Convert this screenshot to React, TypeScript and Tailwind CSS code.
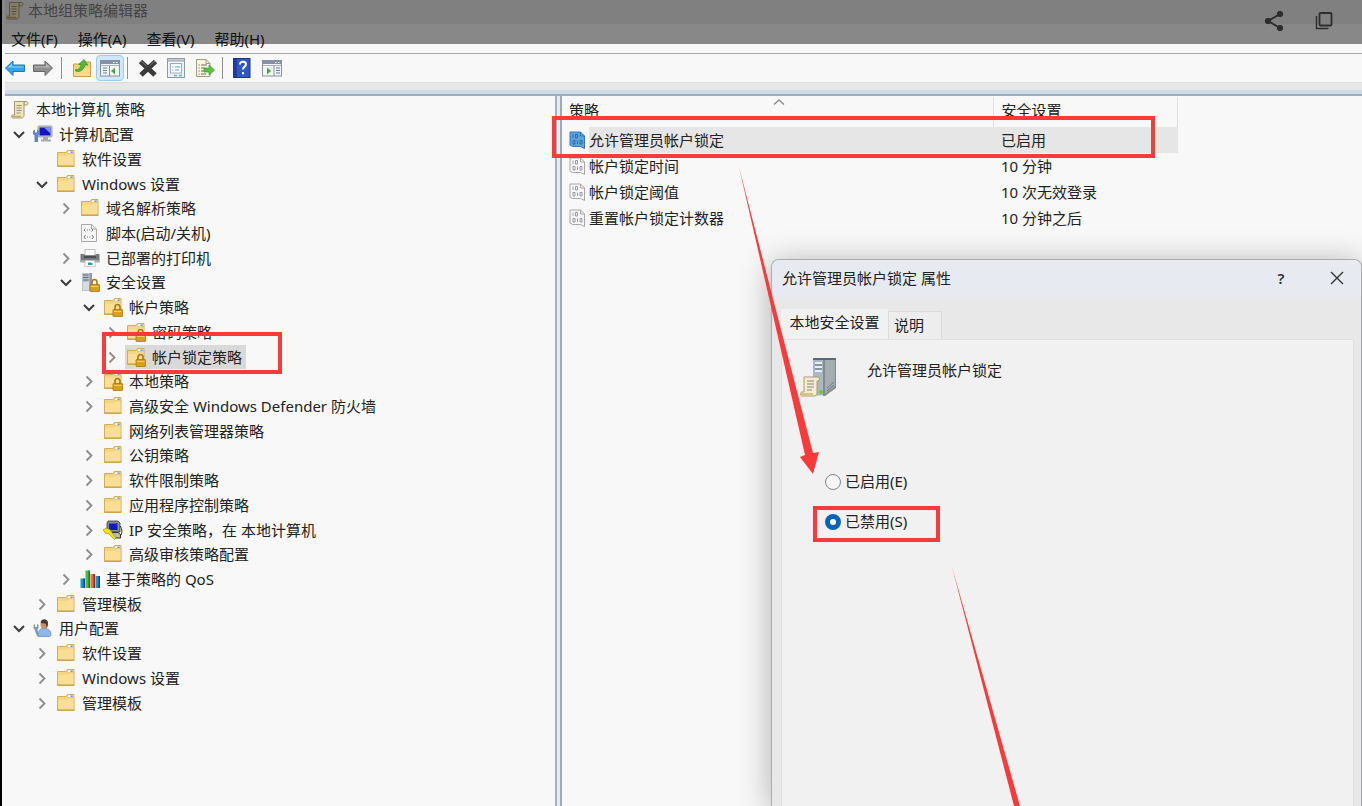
import React, { useState } from "react";

type IconName =
  | "scroll"
  | "computer"
  | "folder"
  | "folderLock"
  | "script"
  | "printer"
  | "server"
  | "ipsec"
  | "qos"
  | "user";

type TreeNode = {
  label: string;
  level: number;
  icon: IconName;
  state?: "open" | "closed";
  selected?: boolean;
};

const menus = ["文件(F)", "操作(A)", "查看(V)", "帮助(H)"];

const tree: TreeNode[] = [
  { label: "本地计算机 策略", level: 0, icon: "scroll" },
  { label: "计算机配置", level: 1, icon: "computer", state: "open" },
  { label: "软件设置", level: 2, icon: "folder" },
  { label: "Windows 设置", level: 2, icon: "folder", state: "open" },
  { label: "域名解析策略", level: 3, icon: "folder", state: "closed" },
  { label: "脚本(启动/关机)", level: 3, icon: "script" },
  { label: "已部署的打印机", level: 3, icon: "printer", state: "closed" },
  { label: "安全设置", level: 3, icon: "server", state: "open" },
  { label: "帐户策略", level: 4, icon: "folderLock", state: "open" },
  { label: "密码策略", level: 5, icon: "folderLock", state: "closed" },
  { label: "帐户锁定策略", level: 5, icon: "folderLock", state: "closed", selected: true },
  { label: "本地策略", level: 4, icon: "folderLock", state: "closed" },
  { label: "高级安全 Windows Defender 防火墙", level: 4, icon: "folder", state: "closed" },
  { label: "网络列表管理器策略", level: 4, icon: "folder" },
  { label: "公钥策略", level: 4, icon: "folder", state: "closed" },
  { label: "软件限制策略", level: 4, icon: "folder", state: "closed" },
  { label: "应用程序控制策略", level: 4, icon: "folder", state: "closed" },
  { label: "IP 安全策略，在 本地计算机", level: 4, icon: "ipsec", state: "closed" },
  { label: "高级审核策略配置", level: 4, icon: "folder", state: "closed" },
  { label: "基于策略的 QoS", level: 3, icon: "qos", state: "closed" },
  { label: "管理模板", level: 2, icon: "folder", state: "closed" },
  { label: "用户配置", level: 1, icon: "user", state: "open" },
  { label: "软件设置", level: 2, icon: "folder", state: "closed" },
  { label: "Windows 设置", level: 2, icon: "folder", state: "closed" },
  { label: "管理模板", level: 2, icon: "folder", state: "closed" },
];

const indent = ["pl-[4px]", "pl-[7px]", "pl-[30px]", "pl-[54px]", "pl-[77px]", "pl-[100px]"];

const policies = [
  { name: "允许管理员帐户锁定", value: "已启用" },
  { name: "帐户锁定时间", value: "10 分钟" },
  { name: "帐户锁定阈值", value: "10 次无效登录" },
  { name: "重置帐户锁定计数器", value: "10 分钟之后" },
];

function FolderShape() {
  return (
    <>
      <path d="M1.500 3.500h8.500l1.500-2h6.500v16h-16.500z" fill="#f3d583" stroke="#d3ad58" />
      <path d="M2 7h9.500l1.500-1.500H17.500V17H2z" fill="#f8df95" />
      <path d="M1.500 17h17" stroke="#c39b45" />
      <rect x="11.500" y="2" width="6" height="2.500" fill="#fff" stroke="#d3ad58" strokeWidth="0.500" />
      <rect x="14.500" y="2.500" width="2.200" height="1.500" fill="#5b9bd5" />
    </>
  );
}

function LockShape() {
  return (
    <>
      <path d="M12 13v-2.500a2.500 3 0 0 1 5 0V13" fill="none" stroke="#a77a12" strokeWidth="1.600" />
      <rect x="10" y="12.500" width="9.500" height="7" rx="0.500" fill="#d9a020" stroke="#a9780f" strokeWidth="0.800" />
      <path d="M11 14.500h7.500" stroke="#f3cd62" />
    </>
  );
}

function ScrollShape() {
  return (
    <>
      <path d="M4.500 2.500h12c2 0 2 3.500 0 3.500H14v10.500c0 2-1.500 2.500-3 2.500H3c-2 0-2-3 0-3h1.500z" fill="#f3e6bc" stroke="#a5987a" />
      <path d="M14 6V4c0-1 1-1.500 2-1.500" fill="none" stroke="#8d846d" />
      <path d="M2 17.500h9" stroke="#c5a95e" strokeWidth="1.500" />
      <path d="M6.500 6.500h5M6.500 9h5M6.500 11.500h5M6.500 14h4" stroke="#938b7b" />
    </>
  );
}

function TreeIcon({ name }: { name: IconName }) {
  return (
    <svg viewBox="0 0 20 20" className="size-5 shrink-0" aria-hidden="true">
      {name === "folder" && <FolderShape />}
      {name === "folderLock" && (
        <>
          <FolderShape />
          <LockShape />
        </>
      )}
      {name === "scroll" && <ScrollShape />}
      {name === "computer" && (
        <>
          <rect x="5" y="2" width="14" height="11" rx="1" fill="#c9ccd4" stroke="#8b8f9a" strokeWidth="0.800" />
          <rect x="6.500" y="3.500" width="11" height="8" fill="#1414c4" />
          <path d="M11 3.500h6.500v6z" fill="#7d91f0" />
          <path d="M10 13h5v2.500h3v2H8v-2h2z" fill="#a6a9b1" />
          <path d="M0 7l2-1.500v3h2v-3L6 7v3l-1 1.500V18H1.500v-6.500L0 10z" fill="#6288b8" />
        </>
      )}
      {name === "script" && (
        <>
          <path d="M1.500 1.500h10l5 4.500v12.500h-15z" fill="#f7f7f7" stroke="#a9a9a9" />
          <path d="M11.500 1.500V6h5" fill="none" stroke="#a9a9a9" />
          <path d="M5.500 5.500L4 7l1.500 1.500M11.500 5.500L13 7l-1.500 1.500M5.500 12L4 14l1.500 2M12 12l1.500 2-1.500 2" fill="none" stroke="#777" />
          <path d="M7 7h1M9 7h1M7 14h1M9.500 14h1" stroke="#777" />
        </>
      )}
      {name === "printer" && (
        <>
          <rect x="5" y="1.500" width="10" height="6" fill="#fafafa" stroke="#aaa" strokeWidth="0.700" />
          <path d="M0.500 6h4v2h11V6h4v8H.5z" fill="#777b80" />
          <path d="M0.500 12h19v2.500H.5z" fill="#a8abb0" />
          <path d="M4 7.500h12V10H4z" fill="#4a4d52" />
          <path d="M5.500 12.500h9l1 6h-11z" fill="#fff" stroke="#bbb" strokeWidth="0.700" />
          <rect x="8" y="14.500" width="3" height="2.500" fill="#2f8fd0" />
          <rect x="11" y="15" width="1.500" height="2" fill="#3aa36b" />
        </>
      )}
      {name === "server" && (
        <>
          <path d="M2 1h9v18H2z" fill="#b9c3cd" />
          <path d="M9.500 1H12v18H9.500z" fill="#8d99a6" />
          <path d="M3 3h5.500M3 5.500h5.500M3 8h5.500" stroke="#5b6a7a" />
          <path d="M3 10h6v8H3z" fill="#d5dce3" />
          <LockShape />
        </>
      )}
      {name === "ipsec" && (
        <>
          <path d="M5 1h10l2 2v9H4V3z" fill="#8c8c8c" stroke="#222" strokeWidth="0.700" />
          <rect x="6" y="3.500" width="8.500" height="6.500" fill="#0d1ad0" />
          <path d="M5 12.500h10l2.500 2v3.500h-5" fill="#bbb" stroke="#222" strokeWidth="0.900" />
          <path d="M0 10l3-2 4 1.500 2 3 4 5.500-1.500 1.500L6 14l-4-1-.5-1.500z" fill="#f2e400" stroke="#7c7200" strokeWidth="0.500" />
          <path d="M17 6c2.500 3 2.500 8 0 10" fill="none" stroke="#222" />
        </>
      )}
      {name === "qos" && (
        <>
          <path d="M0.500 9.500h4V19h-4z" fill="#1f8fd6" />
          <path d="M3.500 9.500h1.500V19H3.500z" fill="#0c4a7c" />
          <path d="M5.500 1.500h4V19h-4z" fill="#3fc24c" />
          <path d="M8.500 1.500H10V19H8.500z" fill="#157a25" />
          <path d="M10.500 5h4v14h-4z" fill="#f0693f" />
          <path d="M13.500 5H15v14h-1.500z" fill="#8e2d12" />
          <path d="M15.500 7H19v12h-3.500z" fill="#1f8fd6" />
          <path d="M18.500 7H20v12h-1.500z" fill="#0c4a7c" />
        </>
      )}
      {name === "user" && (
        <>
          <path d="M5 18.500c0-6 2.500-8.500 6-8.500s7 2.500 7 6.500c0 1.500-1 2-2 2z" fill="#8db8e8" stroke="#5d86b8" strokeWidth="0.700" />
          <ellipse cx="11" cy="6.500" rx="3.500" ry="4.200" fill="#c98f66" />
          <path d="M7.500 4.500c1-4.500 7.500-4 7.500.5 0 2.500-.5 4-1.500 5 0-2-.3-3.500-1-4.500-1.500.3-3.500 0-5-1z" fill="#4b3a31" />
          <path d="M0.500 7L2 6v3h2V6l1.500 1v3L4.500 11.500 6 18H4L1.500 11.500.5 10z" fill="#8697ac" />
        </>
      )}
    </svg>
  );
}

function Expander({ state }: { state?: "open" | "closed" }) {
  return (
    <span className="mr-1.5 flex w-3.5 shrink-0 justify-center">
      {state && (
        <svg viewBox="0 0 14 14" className="size-3.5" fill="none" strokeWidth="1.800" aria-hidden="true">
          {state === "open" ? (
            <path d="M2 5l5 5 5-5" stroke="#3c3c3c" strokeWidth="2" />
          ) : (
            <path d="M4.500 2.500L9.500 7.500l-5 5" stroke="#8c8c8c" />
          )}
        </svg>
      )}
    </span>
  );
}

function PolicyIcon({ active }: { active: boolean }) {
  const line = active ? "#2f78b8" : "#a6a6a6";
  return (
    <svg viewBox="0 0 18 18" className="mr-0.5 size-[18px] shrink-0" aria-hidden="true">
      <path d="M1 1h10.500l4 4v12.500l-4-2H3.500L1 14z" fill={active ? "#5fa3dc" : "#f8f8f8"} stroke={line} />
      <path d="M11.500 1v4h4" fill="none" stroke={line} />
      <path
        d="M4 3.500v3.500M6.500 3.500h2V7h-2zM4 9.500h2v3.500H4zM8.500 9.500V13M11 9.500h2V13h-2z"
        fill="none"
        stroke={active ? "#2468a4" : "#8f8f99"}
        strokeWidth="0.900"
      />
    </svg>
  );
}

function ToolButton({
  label,
  className = "",
  children,
}: {
  label: string;
  className?: string;
  children: React.ReactNode;
}) {
  return (
    <button type="button" aria-label={label} className={`flex h-[26px] w-7 shrink-0 items-center justify-center ${className}`}>
      <svg viewBox="0 0 20 20" className="size-5">
        {children}
      </svg>
    </button>
  );
}

function Separator() {
  return <span className="h-[22px] w-px shrink-0 bg-[#8e8e8e]" />;
}

function PaneShape() {
  return (
    <>
      <rect x="0.500" y="2.500" width="19" height="15.500" fill="#f2f4f7" stroke="#8a909b" />
      <path d="M1 3h18v3H1z" fill="#8492a8" />
      <path d="M13 4.500h1.500M16 4.500h1.500" stroke="#fff" />
      <path d="M1 7.500h18" stroke="#a8b0bd" />
    </>
  );
}

function Toolbar() {
  return (
    <div className="flex h-[29px] items-center border-b border-[#dcdcdc]">
      <ToolButton label="后退" className="-ml-1">
        <path d="M0.500 10L8 3v4h11.500v6.500H8V17.500z" fill="#35a3e6" stroke="#1d78b8" />
        <path d="M2.500 9.500L7 5.500V8.500h11.500v1z" fill="#8bd0f7" />
      </ToolButton>
      <ToolButton label="前进" className="mr-1">
        <path d="M19.500 10L12 3v4H.5v6.500H12V17.500z" fill="#8f8f8f" stroke="#666" />
        <path d="M17.500 9.500L13 5.500V8.500H1.500v1z" fill="#b9b9b9" />
      </ToolButton>
      <Separator />
      <ToolButton label="上一级" className="ml-1.5">
        <path d="M1.500 6h8l1.500-2h7.500v14.500h-17z" fill="#f3cf7a" stroke="#c99f48" />
        <path d="M2 10.500h16V18H2z" fill="#f7da8d" />
        <path d="M3.500 11.500C7 12 8.500 9.500 9 6.500H6.500l5.500-5 4 5.500h-3C12 12 8 14.500 3.500 13z" fill="#4fb83a" stroke="#2d8a20" strokeWidth="0.600" />
      </ToolButton>
      <ToolButton label="显示/隐藏控制台树" className="mr-[3px] rounded border border-[#9ccbf0] bg-[#cfe7fa]">
        <PaneShape />
        <path d="M9.500 8v10" stroke="#8a909b" />
        <path d="M3 10h4M3 12.500h4M3 15h4" stroke="#5f7fa5" strokeWidth="1.200" />
        <path d="M15 9.500v7L11 13z" fill="#3fae35" />
      </ToolButton>
      <Separator />
      <ToolButton label="删除" className="ml-1.5">
        <path d="M2.500 3.500L17 17M17.500 3.500L3 17" stroke="#3b3b3b" strokeWidth="5" />
        <path d="M3 3l5.500 5M17 3l-4.500 4" stroke="#777" />
      </ToolButton>
      <ToolButton label="属性">
        <rect x="1.500" y="0.500" width="17" height="19" fill="#edf1f5" stroke="#8f99a6" />
        <path d="M2 2.500h16" stroke="#a7b0bd" strokeWidth="2" />
        <rect x="4.500" y="5.500" width="11" height="9.500" fill="#fff" stroke="#9dabbd" />
        <path d="M6.500 9h1M6.500 12h1M9 9h5M9 12h4" stroke="#4f9ccf" strokeWidth="1.200" />
        <path d="M8 17.500h3M13 17.500h3" stroke="#58b4df" strokeWidth="1.400" />
      </ToolButton>
      <ToolButton label="导出列表" className="ml-px">
        <path d="M1.500 1.500h9.500l4 4v13h-13.500z" fill="#faf6df" stroke="#a39b80" />
        <path d="M11 1.500v4h4" fill="none" stroke="#a39b80" />
        <path d="M3.500 7h1.200M3.500 10h1.200M3.500 13h1.200M3.500 16h1.200M6 7h6M6 10h4M6 13h4M6 16h5" stroke="#6d6a62" />
        <path d="M9 10h5V7l5.500 5-5.500 5v-3H9z" fill="#58c43c" stroke="#36932a" strokeWidth="0.600" />
      </ToolButton>
      <span className="mx-[3px] flex">
        <Separator />
      </span>
      <ToolButton label="帮助" className="ml-0.5">
        <rect x="1.500" y="0.500" width="16.500" height="19" fill="#3057c4" stroke="#1e3482" />
        <path d="M2 1h3v18H2z" fill="#1e3f9e" />
        <path d="M8 6.500c0-4 6-3.500 6-.3 0 2.300-3 2.300-3 5.300M11 14v2.300" fill="none" stroke="#fff" strokeWidth="2" />
      </ToolButton>
      <ToolButton label="显示/隐藏操作窗格" className="ml-0.5">
        <PaneShape />
        <path d="M12 8v10" stroke="#8a909b" />
        <path d="M14 10h4M14 12.500h4M14 15h4" stroke="#5f7fa5" strokeWidth="1.200" />
        <path d="M5 9.500v7l4-3.500z" fill="#3fae35" />
      </ToolButton>
    </div>
  );
}

function PolicyTree() {
  return (
    <ul className="grid h-[619px] auto-rows-fr pt-px">
      {tree.map((node, i) => (
        <li key={i} className={`flex min-h-0 items-center ${indent[node.level]}`}>
          {node.level > 0 && <Expander state={node.state} />}
          <span className={`flex h-6 items-center whitespace-nowrap px-px pr-1 ${node.selected ? "bg-[#d9d9d9]" : ""}`}>
            <TreeIcon name={node.icon} />
            <span className="ml-1.5">{node.label}</span>
          </span>
        </li>
      ))}
    </ul>
  );
}

function PolicyList() {
  return (
    <table className="w-[616px] table-fixed border-collapse text-left">
      <thead>
        <tr className="h-[30px]">
          <th className="relative w-[431px] border-r border-[#dedede] p-0 pb-1 pl-[7px] font-normal">
            策略
            <svg viewBox="0 0 12 6" className="absolute left-[211px] top-0.5 h-1.5 w-3" fill="none" aria-hidden="true">
              <path d="M1 5.500l5-4.500 5 4.500" stroke="#8a8a8a" strokeWidth="1.400" />
            </svg>
          </th>
          <th className="border-r border-[#dedede] p-0 pb-1 pl-2 font-normal">安全设置</th>
        </tr>
      </thead>
      <tbody>
        {policies.map((p, i) => (
          <tr key={p.name} className="h-[26px]">
            <td className="p-0">
              <div className="flex h-[26px] items-center pl-[7px]">
                <PolicyIcon active={i === 0} />
                <span className={`flex h-full flex-1 items-center ${i === 0 ? "bg-[#e6e6e6]" : ""}`}>{p.name}</span>
              </div>
            </td>
            <td className={`p-0 pl-2 ${i === 0 ? "bg-[#e6e6e6]" : ""}`}>{p.value}</td>
          </tr>
        ))}
      </tbody>
    </table>
  );
}

function PropertiesDialog() {
  const [value, setValue] = useState("S");
  const options = [
    { id: "E", label: "已启用(E)" },
    { id: "S", label: "已禁用(S)" },
  ];

  return (
    <section
      role="dialog"
      aria-label="允许管理员帐户锁定 属性"
      className="absolute bottom-0 left-[769px] right-0 top-[259px] flex flex-col overflow-hidden rounded-t-lg border border-b-0 border-[#a9abae] bg-[#e8e8e8] shadow-[0_4px_32px_rgba(0,0,0,0.3)]"
    >
      <header className="flex h-[37px] shrink-0 items-center bg-[#e7ebf1] pb-px pl-2.5 pr-3">
        <h2 className="flex-1">允许管理员帐户锁定 属性</h2>
        <button type="button" aria-label="帮助" className="mr-9 w-4 font-semibold text-[#333]">
          ?
        </button>
        <button type="button" aria-label="关闭" className="flex w-6 justify-center">
          <svg viewBox="0 0 14 14" className="size-3.5">
            <path d="M1 1l12 12M13 1L1 13" stroke="#333" strokeWidth="1.400" />
          </svg>
        </button>
      </header>
      <div className="flex flex-1 flex-col pl-[9px] pr-[7px] pt-3">
        <div role="tablist" className="flex items-end">
          <button type="button" role="tab" aria-selected="true" className="h-[30px] w-[107px] bg-[#f1f1f1] pb-1">
            本地安全设置
          </button>
          <button
            type="button"
            role="tab"
            aria-selected="false"
            className="h-7 w-[54px] border border-b-0 border-[#dcdcdc] bg-[#ededed] pb-0.5 pr-3"
          >
            说明
          </button>
        </div>
        <div role="tabpanel" className="flex-1 border border-b-0 border-[#e0e0e0] bg-[#f1f1f1] pl-[17px] pt-4">
          <div className="flex gap-7">
            <svg viewBox="0 0 40 42" className="h-[42px] w-10" aria-hidden="true">
              <path d="M14 3l12-1v37l-12 1z" fill="#a9b8c4" />
              <path d="M24 3l13-1v30l-11 8h-2z" fill="#7f8c90" />
              <path d="M26 4l10-1v27l-10 8z" fill="#a4aeb0" />
              <path d="M14 2h23v2H14z" fill="#596a76" />
              <path d="M16 7h7M16 11h7M16 15h7" stroke="#e8eff4" strokeWidth="2" />
              <path d="M16 9h7M16 13h7" stroke="#5d7486" />
              <path d="M28 32l7-6M28 35l7-6" stroke="#6f7a7c" />
              <circle cx="22" cy="36" r="2" fill="#6ad01c" />
              <path d="M5 21h14c2 0 2 4 0 4h-1v12c0 2-1 3-3 3H3c-2 0-2-4 0-4h2z" fill="#f7eccb" stroke="#ad9c6c" />
              <path d="M2 38h12" stroke="#cdb467" strokeWidth="1.500" />
              <path d="M8 25h7M8 28h7M8 31h7M8 34h5" stroke="#8583a0" />
            </svg>
            <p className="pt-1">允许管理员帐户锁定</p>
          </div>
          <fieldset className="mt-[71px] flex flex-col gap-4 pl-[26px]">
            {options.map((o) => (
              <label key={o.id} className="flex h-6 items-center gap-1">
                <input
                  type="radio"
                  name="policy"
                  checked={value === o.id}
                  onChange={() => setValue(o.id)}
                  className="mt-0.5 size-4 appearance-none rounded-full border border-[#858585] bg-[#f6f6f6] checked:border-5 checked:border-[#0a63b8] checked:bg-white"
                />
                {o.label}
              </label>
            ))}
          </fieldset>
        </div>
      </div>
    </section>
  );
}

// Red marks drawn on top of the windows
function Annotations() {
  return (
    <div className="pointer-events-none absolute inset-0 overflow-hidden" aria-hidden="true">
      <div className="absolute left-[100px] top-[332px] h-[42px] w-[180px] border-4 border-[#f73b3b]" />
      <div className="absolute left-[550px] top-[116px] h-[42px] w-[603px] border-4 border-[#f73b3b]" />
      <div className="absolute left-[811px] top-[506px] h-9 w-[127px] border-4 border-[#f73b3b]" />
      <svg width="1360" height="806" viewBox="2 0 1360 806" className="absolute left-0 top-0" fill="#f73b3b">
        <path d="M739 167L813 453l6-1-6 22-13-17 5-2z" />
        <path d="M952 567L1020 806h-6z" />
      </svg>
    </div>
  );
}

export default function App() {
  return (
    <div className="relative flex h-screen flex-col overflow-hidden border-l-2 border-black bg-[#f8f8f8] pl-[3px] font-['Noto_Sans','Noto_Sans_CJK_SC',sans-serif] text-[15px] leading-5 text-[#222]">
      <header className="flex h-6 shrink-0 items-center bg-[#eaeaea] pb-1">
        <svg viewBox="0 0 20 20" className="size-5" aria-hidden="true">
          <ScrollShape />
        </svg>
        <h1 className="ml-[3px] text-[#7c7c7c]">本地组策略编辑器</h1>
      </header>
      <nav className="flex h-[30px] shrink-0 items-center gap-5 border-b border-[#a8a8a8] pl-1.5">
        {menus.map((m) => (
          <button key={m} type="button">
            {m}
          </button>
        ))}
      </nav>
      <div className="shrink-0">
        <Toolbar />
        <div className="h-[7px] bg-[#e7e7e7]" />
        <div className="h-[6px] border-b-2 border-[#a3abb8] bg-[#cddcea]" />
      </div>
      <main className="flex min-h-0 flex-1">
        <div className="w-[552px] shrink-0 overflow-hidden border-r-2 border-[#a8b0b9]">
          <PolicyTree />
        </div>
        <div className="w-[3px] shrink-0 bg-[#e6ebf0]" />
        <div className="min-w-0 flex-1 border-l-2 border-[#a0a8b2] pt-px">
          <PolicyList />
        </div>
      </main>

      <PropertiesDialog />
      <Annotations />

      {/* viewer bar over the top of the window */}
      <div className="absolute inset-x-0 top-0 flex h-11 items-start justify-end gap-[26px] bg-black/45 pr-[26px] pt-2">
        <button type="button" aria-label="分享">
          <svg viewBox="0 0 24 24" className="size-6" fill="#2d2d2d" stroke="#2d2d2d">
            <path d="M18 6L6 13l12 7" fill="none" strokeWidth="2" />
            <circle cx="18" cy="6" r="2.700" />
            <circle cx="6" cy="13" r="2.700" />
            <circle cx="18" cy="20" r="2.700" />
          </svg>
        </button>
        <button type="button" aria-label="复制">
          <svg viewBox="0 0 24 24" className="size-6" fill="none" stroke="#2d2d2d">
            <rect x="7.500" y="5" width="12" height="12.500" rx="1" strokeWidth="1.800" />
            <path d="M4.500 8v12.500H16.500" strokeWidth="1.400" />
          </svg>
        </button>
      </div>
    </div>
  );
}
